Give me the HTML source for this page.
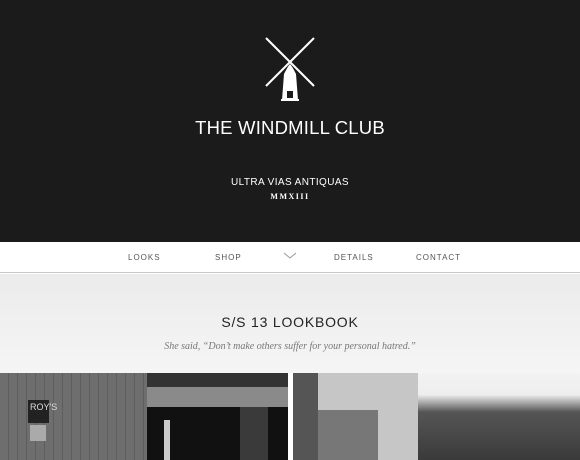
<!DOCTYPE html>
<html><head><meta charset="utf-8"><style>
*{margin:0;padding:0;box-sizing:border-box}
body{width:580px;height:460px;overflow:hidden;background:#fff;font-family:"Liberation Sans",sans-serif;position:relative}
.hdr{position:absolute;left:0;top:0;width:580px;height:242px;background:#1c1b1c;color:#fff;text-align:center}
.t1{position:absolute;top:117px;width:100%;font-size:18.5px;letter-spacing:0.2px;font-weight:300}
.t2{position:absolute;top:177px;width:100%;font-size:10px;letter-spacing:0.4px}
.t3{position:absolute;top:192px;width:100%;font-size:8px;letter-spacing:1.5px;font-family:"Liberation Serif",serif;font-weight:bold}
.nav{position:absolute;top:242px;height:31px;width:580px;border-bottom:1px solid #c8c8c8;font-size:8px;letter-spacing:1px;color:#555}
.nav span{position:absolute;top:11px}
.gray{position:absolute;top:274px;height:99px;width:580px;background:linear-gradient(#ebebeb,#f5f5f5)}
.h2{position:absolute;top:314px;width:100%;text-align:center;font-size:14px;letter-spacing:0.8px;color:#222}
.q{position:absolute;top:341px;width:100%;text-align:center;font-size:10px;color:#777;font-family:"Liberation Serif",serif;font-style:italic}
</style></head><body>
<div class="hdr">
<svg width="580" height="110" style="position:absolute;left:0;top:0">
<line x1="266" y1="38" x2="314" y2="86" stroke="#fff" stroke-width="2"/>
<line x1="314" y1="38" x2="266" y2="86" stroke="#fff" stroke-width="2"/>
<path d="M282 100 L284 74 Q288 66 290 64 Q292 66 296 74 L298 100 Z" fill="#fff"/>
<rect x="287" y="91" width="6" height="7" fill="#1c1b1c"/>
<rect x="281" y="99" width="18" height="2" fill="#fff"/>
</svg>
<div class="t1">THE WINDMILL CLUB</div>
<div class="t2">ULTRA VIAS ANTIQUAS</div>
<div class="t3">MMXIII</div>
</div>
<div class="nav">
<span style="left:128px">LOOKS</span>
<span style="left:215px">SHOP</span>
<svg style="position:absolute;left:283px;top:10px" width="14" height="8"><path d="M1 1 L7 6 L13 1" stroke="#999" fill="none" stroke-width="1"/></svg>
<span style="left:334px">DETAILS</span>
<span style="left:416px">CONTACT</span>
</div>
<div class="gray"></div>
<div class="h2">S/S 13 LOOKBOOK</div>
<div class="q">She said, “Don’t make others suffer for your personal hatred.”</div>
<div style="position:absolute;top:373px;left:0;width:147px;height:87px;background:repeating-linear-gradient(90deg,#6e6e6e 0 8px,#5e5e5e 8px 9px)"></div>
<div style="position:absolute;top:400px;left:28px;width:21px;height:23px;background:#222"></div>
<div style="position:absolute;top:402px;left:30px;font-size:9px;color:#ddd">ROY'S</div>
<div style="position:absolute;top:425px;left:30px;width:16px;height:16px;background:#aaa"></div>
<div style="position:absolute;top:373px;left:147px;width:141px;height:87px;background:#111"></div>
<div style="position:absolute;top:373px;left:147px;width:141px;height:14px;background:#333"></div>
<div style="position:absolute;top:387px;left:147px;width:141px;height:20px;background:#8a8a8a"></div>
<div style="position:absolute;top:407px;left:240px;width:28px;height:53px;background:#3a3a3a"></div>
<div style="position:absolute;top:420px;left:164px;width:6px;height:40px;background:#ccc"></div>
<div style="position:absolute;top:373px;left:293px;width:125px;height:87px;background:#c6c6c6"></div>
<div style="position:absolute;top:373px;left:293px;width:25px;height:87px;background:#555"></div>
<div style="position:absolute;top:410px;left:318px;width:60px;height:50px;background:#777"></div>
<div style="position:absolute;top:373px;left:418px;width:162px;height:87px;background:linear-gradient(#f2f2f2 0,#eee 25%,#555 45%,#3a3a3a 100%)"></div>
</body></html>
